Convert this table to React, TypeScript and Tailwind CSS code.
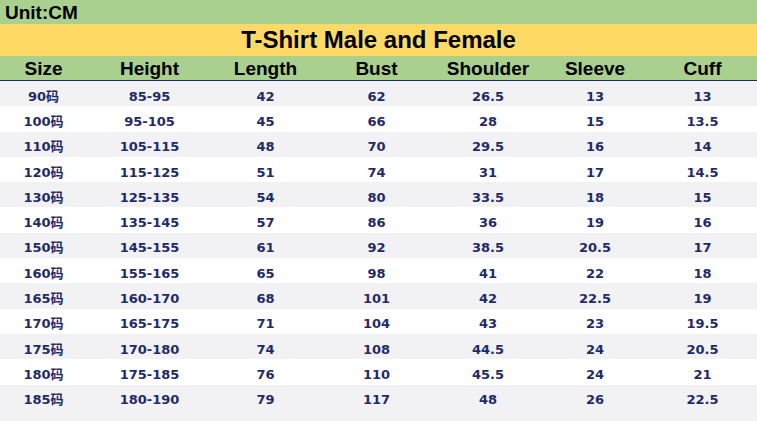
const columns = [
  { label: "Size", width: "w-[87px]" },
  { label: "Height", width: "w-[125px]" },
  { label: "Length", width: "w-[107px]" },
  { label: "Bust", width: "w-[115px]" },
  { label: "Shoulder", width: "w-[108px]" },
  { label: "Sleeve", width: "w-[106px]" },
  { label: "Cuff", width: "w-[109px]" },
];

const rows = [
  ["90码", "85-95", "42", "62", "26.5", "13", "13"],
  ["100码", "95-105", "45", "66", "28", "15", "13.5"],
  ["110码", "105-115", "48", "70", "29.5", "16", "14"],
  ["120码", "115-125", "51", "74", "31", "17", "14.5"],
  ["130码", "125-135", "54", "80", "33.5", "18", "15"],
  ["140码", "135-145", "57", "86", "36", "19", "16"],
  ["150码", "145-155", "61", "92", "38.5", "20.5", "17"],
  ["160码", "155-165", "65", "98", "41", "22", "18"],
  ["165码", "160-170", "68", "101", "42", "22.5", "19"],
  ["170码", "165-175", "71", "104", "43", "23", "19.5"],
  ["175码", "170-180", "74", "108", "44.5", "24", "20.5"],
  ["180码", "175-185", "76", "110", "45.5", "24", "21"],
  ["185码", "180-190", "79", "117", "48", "26", "22.5"],
];

export default function App() {
  return (
    <div className="w-[757px] h-[421px] overflow-hidden bg-[#f2f2f4] flex flex-col">
      {/* Unit bar */}
      <div className="h-[24px] bg-[#a9d08e] flex items-center pl-[5px] font-['Liberation_Sans',sans-serif] font-bold text-[19px] text-black leading-none">
        Unit:CM
      </div>

      {/* Title */}
      <div className="h-[32px] bg-[#ffd966] flex items-center justify-center font-['Liberation_Sans',sans-serif] font-bold text-[24px] text-black leading-none">
        T-Shirt Male and Female
      </div>

      {/* Header */}
      <div className="h-[24px] bg-[#a9d08e] flex font-['Liberation_Sans',sans-serif] font-bold text-[19px] text-black leading-none">
        {columns.map((c) => (
          <div key={c.label} className={`${c.width} flex items-center justify-center`}>
            {c.label}
          </div>
        ))}
      </div>
      <div className="h-px bg-[#1f2a6b]" />

      {/* Rows */}
      <div className="flex flex-col font-['DejaVu_Sans','Noto_Sans_CJK_SC',sans-serif] font-bold text-[13px] text-[#1f2a6b] leading-none">
        {rows.map((r, i) => (
          <div
            key={r[0]}
            className={`h-[25.3px] flex ${i % 2 === 0 ? "bg-[#f2f2f4]" : "bg-white"}`}
          >
            {r.map((v, j) => (
              <div key={j} className={`${columns[j].width} flex items-center justify-center pt-[5px]`}>
                {v}
              </div>
            ))}
          </div>
        ))}
      </div>
    </div>
  );
}
